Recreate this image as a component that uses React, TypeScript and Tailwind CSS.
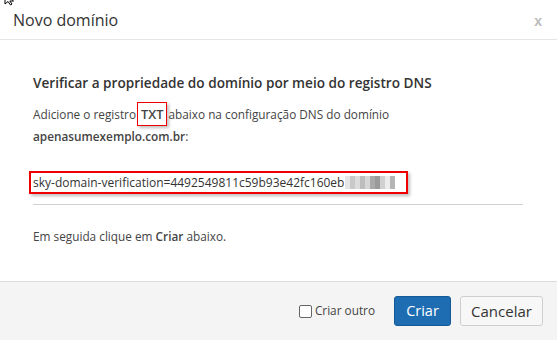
import React from "react";

const font = { fontFamily: '"Open Sans", "Noto Sans", sans-serif' };

function Pixelated() {
  const cells = ["#e6e6e6", "#c9c9c9", "#dcdcdc", "#bdbdbd", "#d6d6d6", "#a9a9a9", "#9a9a9a", "#d0d0d0", "#ececec", "#b5b5b5"];
  return (
    <span className="ml-[1px] inline-flex h-[13px] items-center">
      {cells.map((c, i) => (
        <span key={i} className="h-[13px] w-[5px]" style={{ backgroundColor: c }} />
      ))}
    </span>
  );
}

export default function App() {
  return (
    <div className="relative flex h-[340px] w-[557px] flex-col bg-white text-[#333]" style={font}>
      <svg className="absolute left-[4px] top-[-6px]" width="12" height="12" viewBox="0 0 12 12">
        <path d="M1 0 L1 10 L4 7.5 L6.5 11 L8 10 L5.8 7 L9.5 7 Z" fill="#fff" stroke="#000" strokeWidth="1" />
      </svg>
      <div className="flex h-[40px] items-center justify-between border-b border-[#e5e5e5] pl-[13px] pr-[15px]">
        <span className="text-[16px] text-[#333]">Novo domínio</span>
        <span className="mt-[3px] text-[14px] font-bold text-[#bbb]" style={{ fontFamily: '"Liberation Sans", sans-serif' }}>x</span>
      </div>
      <div className="flex-1 pl-[33px] pr-[34px] pt-[31px]">
        <h2 className="text-[13.6px] font-semibold leading-[24px] text-[#333]">Verificar a propriedade do domínio por meio do registro DNS</h2>
        <p className="mt-[7px] text-[11.8px] leading-[21px] text-[#444]">
          Adicione o registro
          <span className="relative mx-[1px] inline-block border border-[#e00] px-[3px] text-[12.8px] font-semibold leading-[22px] shadow-[2px_2px_3px_rgba(0,0,0,0.25)]">TXT</span>
          abaixo na configuração DNS do domínio
          <br />
          <span className="font-semibold">apenasumexemplo.com.br</span>:
        </p>
        <div className="mt-[24px] -ml-[4px] w-[379px] bg-[#e00] p-[2px] shadow-[2px_2px_3px_rgba(0,0,0,0.25)]">
          <div className="flex h-[19px] items-center whitespace-nowrap bg-white pl-[2px] text-[12px] text-[#333]">
            <span>sky-domain-verification=4492549811c59b93e42fc160eb</span>
            <Pixelated />
          </div>
        </div>
        <div className="mt-[10px] h-px w-[490px] bg-[#d0d0d0]" />
        <p className="mt-[21px] text-[11.8px] leading-[21px] text-[#444]">
          Em seguida clique em <span className="font-semibold">Criar</span> abaixo.
        </p>
      </div>
      <div className="flex h-[59px] items-center justify-end gap-[9px] border-t border-[#dcdcdc] bg-[#f4f4f4] pr-[14px]">
        <label className="mr-[10px] flex items-center gap-[3px] text-[11.8px] text-[#444]">
          <span className="h-[13px] w-[13px] rounded-[2px] border border-[#666] bg-white" />
          Criar outro
        </label>
        <button className="h-[30px] w-[57px] rounded-[3px] border border-[#155a96] bg-[#1e6db3] text-[14.5px] text-white">Criar</button>
        <button className="h-[30px] w-[83px] rounded-[3px] border border-[#cfcfcf] bg-[#f7f7f7] text-[15px] text-[#333]">Cancelar</button>
      </div>
    </div>
  );
}
